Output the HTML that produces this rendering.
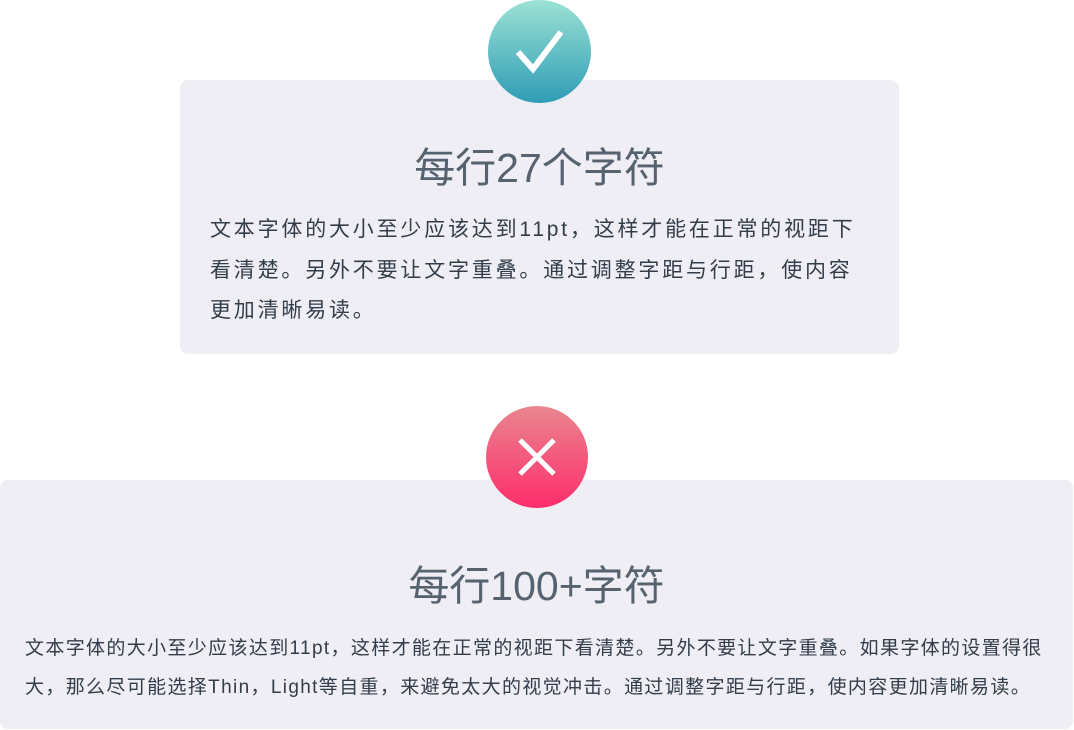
<!DOCTYPE html>
<html><head><meta charset="utf-8"><style>
body{margin:0;width:1074px;height:730px;background:#fff;position:relative;overflow:hidden;font-family:"Liberation Sans","Noto Sans CJK SC",sans-serif;}
.card{position:absolute;background:#efeef4;border-radius:8px;}
.circ{position:absolute;border-radius:50%;}
.t{position:absolute;left:0;right:0;text-align:center;color:#56636f;font-size:41px;white-space:nowrap;}
.p{position:absolute;color:#333d4a;white-space:nowrap;}
</style></head><body>
<div class="card" style="left:180px;top:80px;width:719px;height:274px"></div>
<div class="circ" style="left:488px;top:0;width:103px;height:103px;background:linear-gradient(#9be2d4,#2f9cb6)">
<svg width="103" height="103"><path d="M30 52 L45 69 L73 32" fill="none" stroke="#fff" stroke-width="6"/></svg></div>
<div class="t" style="left:180px;width:719px;top:134px">每行27个字符</div>
<div class="p" style="left:210px;top:210px;font-size:21px;letter-spacing:2.8px;line-height:40.5px">文本字体的大小至少应该达到11pt，这样才能在正常的视距下<br>看清楚。另外不要让文字重叠。通过调整字距与行距，使内容<br>更加清晰易读。</div>

<div class="card" style="left:0;top:480px;width:1073px;height:249px"></div>
<div class="circ" style="left:486px;top:406px;width:102px;height:102px;background:linear-gradient(#e9868f,#fd2d6c)">
<svg width="102" height="102"><path d="M34 34 L68 68 M68 34 L34 68" fill="none" stroke="#fff" stroke-width="5"/></svg></div>
<div class="t" style="left:0;width:1073px;top:552px">每行100+字符</div>
<div class="p" style="left:25px;top:629px;font-size:19px;letter-spacing:1.35px;line-height:39px">文本字体的大小至少应该达到11pt，这样才能在正常的视距下看清楚。另外不要让文字重叠。如果字体的设置得很<br>大，那么尽可能选择Thin，Light等自重，来避免太大的视觉冲击。通过调整字距与行距，使内容更加清晰易读。</div>
</body></html>
